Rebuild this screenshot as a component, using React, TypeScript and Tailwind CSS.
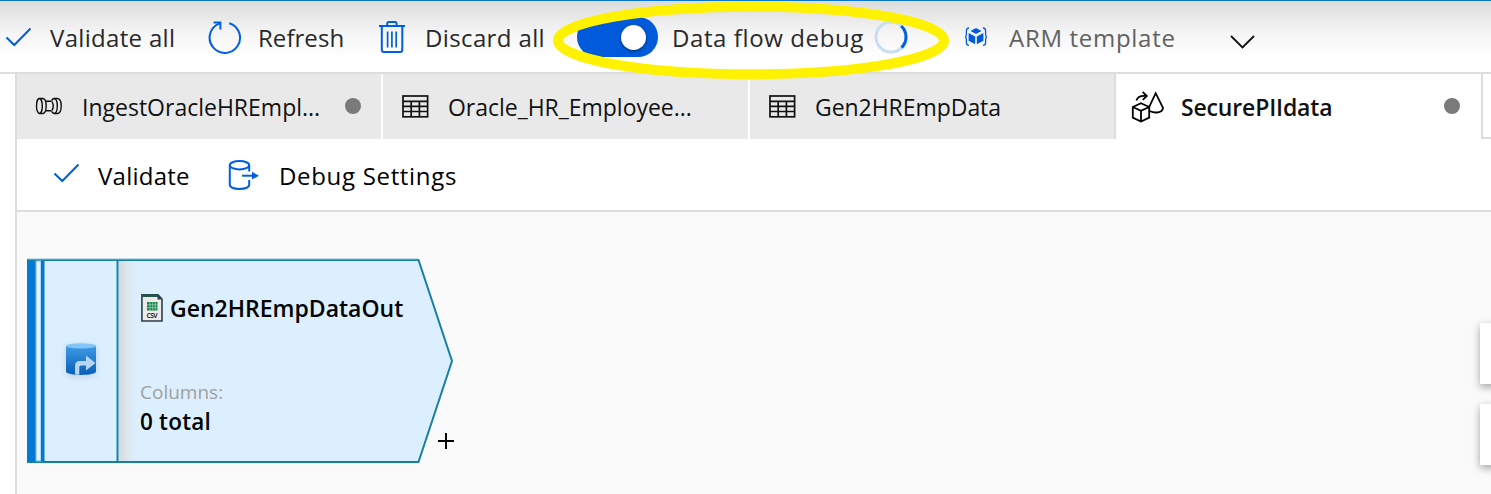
import React from "react";

const Check = () => (
  <svg width="28" height="20" viewBox="0 0 28 20" fill="none" stroke="#005ee0" strokeWidth="2" className="shrink-0">
    <path d="M2.5 10.5 L10.3 18 L26.5 1.5" />
  </svg>
);

const Refresh = () => (
  <svg width="36" height="36" viewBox="0 0 36 36" fill="none" stroke="#005ee0" strokeWidth="2" className="shrink-0">
    <path d="M21.3 4.2 A15.2 15.2 0 1 1 11.2 4.6 L12.6 3.8" />
    <path d="M5.5 3.4 H12.4 V10.5" />
  </svg>
);

const Trash = () => (
  <svg width="28" height="34" viewBox="0 0 28 34" fill="none" stroke="#005ee0" strokeWidth="2" className="shrink-0">
    <path d="M0 6 H26 M8.2 6 V4 Q8.2 2 9.8 2 H16 Q17.6 2 17.6 4 V6" />
    <path d="M2.8 6.5 V29.5 Q2.8 32 5 32 H21.2 Q23.3 32 23.3 29.5 V6.5" />
    <path d="M8.6 11.5 V27.5 M12.9 11.5 V27.5 M17.2 11.5 V27.5" strokeWidth="1.7" />
  </svg>
);

const Toggle = () => (
  <div className="flex h-10 w-[81px] shrink-0 items-center justify-end rounded-full bg-[#005ad9] pr-[12px]">
    <div className="h-[25px] w-[25px] rounded-full bg-white shadow-[0_1px_3px_rgba(0,0,0,0.5)]" />
  </div>
);

const Spinner = () => (
  <svg width="34" height="34" viewBox="0 0 34 34" fill="none" strokeWidth="3" className="shrink-0">
    <circle cx="17" cy="17" r="15" stroke="#c7def3" />
    <path d="M27.2 6 A15 15 0 0 1 27.6 27.6" stroke="#0060e0" />
  </svg>
);

const Arm = () => (
  <svg width="22" height="20" viewBox="0 0 22 20" fill="none" className="shrink-0">
    <path d="M4 1 Q1.4 1 1.4 4 V7 Q1.4 9.4 .4 9.8 Q1.4 10.2 1.4 12.5 V15.5 Q1.4 18.4 4 18.4 M18 1 Q20.6 1 20.6 4 V7 Q20.6 9.4 21.6 9.8 Q20.6 10.2 20.6 12.5 V15.5 Q20.6 18.4 18 18.4" stroke="#005ad9" strokeWidth="1.3" />
    <g fill="#005ad9">
      <path d="M11 1 L16.5 4.1 L11 7.1 L5.5 4.1Z" />
      <path d="M3.6 6 L10.2 9.4 V17.2 L3.6 13.8Z" />
      <path d="M18.4 6 L11.8 9.4 V17.2 L18.4 13.8Z" />
    </g>
  </svg>
);

const Pipeline = () => (
  <svg width="28" height="18" viewBox="0 0 28 18" fill="none" stroke="#111" strokeWidth="1.4" className="shrink-0">
    <ellipse cx="4.4" cy="9" rx="2.9" ry="7.5" />
    <path d="M4.4 1.5 H8 C12.2 2 12.2 16 8 16.5 H4.4" />
    <path d="M11 4.3 H16.6 M11 13.7 H16.6" />
    <path d="M17 4.5 C18.4 7 18.4 11 17 13.5" />
    <path d="M16.6 3.6 C17.3 2.2 18 1.5 19.2 1.5 C23.3 2 23.3 16 19.2 16.5 C18 16.5 17.3 15.8 16.6 14.4" />
    <path d="M19.2 1.5 H22.6 C27.4 2 27.4 16 22.6 16.5 H19.2" />
  </svg>
);

const Table = () => (
  <svg width="27" height="23" viewBox="0 0 27 23" fill="none" stroke="#111" strokeWidth="1.7" className="shrink-0">
    <rect x="1" y="1" width="24.6" height="20.8" />
    <path d="M1 6.4 H25.6 M1 11.4 H25.6 M1 16.5 H25.6 M9.2 6.4 V21.8 M17.4 6.4 V21.8" />
  </svg>
);

const DataFlow = () => (
  <svg width="34" height="32" viewBox="0 0 34 32" fill="none" stroke="#000" strokeWidth="1.8" className="shrink-0">
    <path d="M10 12.2 L18.2 16 V26.6 L10 30.6 L1.8 26.6 V16Z M1.8 16 L10 19.8 L18.2 16 M10 19.8 V30.6" />
    <path d="M17.4 17.6 L24.7 2.2 L32 16.8 C31.5 22 24 22.5 18.6 20" />
    <path d="M5.4 9.6 C6.5 6 10 4.3 15.4 5 M11.6 .9 L15.8 5 L11.8 8.8" />
  </svg>
);

const DebugDb = () => (
  <svg width="32" height="32" viewBox="0 0 32 32" fill="none" stroke="#005ee0" strokeWidth="2" className="shrink-0">
    <ellipse cx="11.5" cy="6.2" rx="9.7" ry="4.2" />
    <path d="M1.8 6.2 V26 C2.5 31.2 20.5 31.2 21.2 26 V21 M21.2 6.2 V12.6" />
    <path d="M14 16.7 H25" />
    <path d="M24 12.8 L31 16.7 L24 20.5Z" fill="#005ee0" stroke="none" />
  </svg>
);

const Csv = () => (
  <svg width="22" height="28" viewBox="0 0 22 28" className="shrink-0">
    <path d="M.9 .9 H17 L21 5 V27 H.9Z" fill="#eceaea" stroke="#2e3f49" strokeWidth="1.6" />
    <path d="M.9 .4 H17 V3 H.9Z" fill="#215648" />
    <path d="M16.5 .5 L21.5 5.6 H16.5Z" fill="#2e3f49" />
    <rect x="6" y="8" width="10.5" height="8.5" fill="#16874b" />
    <path d="M6 10.8 H17 M6 13.7 H17 M9 8 V16.5 M11.7 8 V16.5 M14.3 8 V16.5" stroke="#a5d3b8" strokeWidth=".7" />
    <text x="11" y="24.4" textAnchor="middle" fontSize="6.6" fontWeight="700" fill="#22323d" textLength="11">CSV</text>
  </svg>
);

const Source = () => (
  <svg width="32" height="34" viewBox="0 0 32 34" className="mb-[5px] overflow-visible drop-shadow-[0_2px_3px_rgba(0,0,0,0.12)]">
    <defs>
      <linearGradient id="db" x1="0" y1="0" x2="0" y2="1">
        <stop offset="0" stopColor="#3f9be6" />
        <stop offset="1" stopColor="#075fba" />
      </linearGradient>
    </defs>
    <path d="M1 4 V29.5 C1 34 31 34 31 29.5 V4Z" fill="url(#db)" />
    <ellipse cx="16" cy="3.9" rx="15" ry="2.7" fill="#83c5f6" />
    <path d="M10 32.5 V24 Q10 19 15 19 H21 V13.5 L30.5 21 L21 28.5 V23.5 H16 Q14.3 23.5 14.3 25.2 V32.7Z" fill="#b7d6f2" />
  </svg>
);

const Dot = () => <div className="mb-[2px] h-4 w-4 shrink-0 rounded-full bg-[#7a7a7a]" />;

export default function App() {
  return (
    <div className="relative h-[494px] w-[1491px] overflow-hidden bg-white font-['Open_Sans','Noto_Sans',sans-serif] text-[24px] whitespace-nowrap text-[#111]">
      <header className="flex h-[74px] items-center border-t border-b-2 border-t-[#0b76cf] border-b-[#dddddd] bg-linear-to-b from-[#dcdcdc] via-[#f5f5f5] via-45% to-white to-80% pt-px text-[#292929]">
        <div className="flex w-[208px] items-center pl-1">
          <Check />
          <span className="mt-px ml-[18px] tracking-[0.32px]">Validate all</span>
        </div>
        <div className="flex w-[171px] items-center">
          <Refresh />
          <span className="mt-px ml-[14px] tracking-[0.05px]">Refresh</span>
        </div>
        <div className="flex w-[198px] items-center">
          <Trash />
          <span className="mt-px ml-[18px] tracking-[0.37px]">Discard all</span>
        </div>
        <div className="flex w-[387px] items-center">
          <Toggle />
          <span className="mt-px ml-[14px] w-[202px] tracking-[0.6px]">Data flow debug</span>
          <Spinner />
        </div>
        <div className="flex w-[265px] items-center">
          <span className="ml-[1px]"><Arm /></span>
          <span className="mt-[2px] ml-[22px] tracking-[0.7px] text-[#616161]">ARM template</span>
        </div>
        <svg width="26" height="16" viewBox="0 0 26 16" fill="none" stroke="#111" strokeWidth="1.8" className="mt-[9px]">
          <path d="M2 2 L13.5 13.5 L25 2" />
        </svg>
      </header>

      <main className="ml-[15px] flex h-[420px] flex-col border-l-2 border-[#dddddd]">
        <nav className="flex h-[65px] shrink-0 text-[23px]">
          <div className="flex w-[366px] shrink-0 items-center border-r-2 border-white bg-[#e9e9e9] pr-5 pl-[18px]">
            <span className="mb-[2px]"><Pipeline /></span>
            <span className="mt-[2px] ml-[19px] w-[263px]">IngestOracleHREmpl...</span>
            <Dot />
          </div>
          <div className="flex w-[367px] shrink-0 items-center border-r-2 border-white bg-[#e9e9e9] pl-[19px]">
            <Table />
            <span className="mt-[2px] ml-[19px] tracking-[-0.03px]">Oracle_HR_Employee...</span>
          </div>
          <div className="flex w-[366px] shrink-0 items-center border-r-2 border-[#dddddd] bg-[#e9e9e9] pl-[19px]">
            <Table />
            <span className="mt-[2px] ml-[19px] tracking-[-0.05px]">Gen2HREmpData</span>
          </div>
          <div className="flex w-[367px] shrink-0 items-center border-r-2 border-[#dddddd] bg-white pl-[15px]">
            <DataFlow />
            <span className="mt-[2px] ml-[16px] w-[263px] font-semibold tracking-[-0.15px]">SecurePIIdata</span>
            <Dot />
          </div>
          <div className="w-[8px] shrink-0 border-b-2 border-[#dddddd]" />
        </nav>
        <div className="flex h-[73px] shrink-0 items-center border-b-2 border-[#dddddd] text-black">
          <span className="mb-[4px] ml-[35px]"><Check /></span>
          <span className="mt-[3px] ml-[18px] w-[130px] tracking-[0.25px]">Validate</span>
          <DebugDb />
          <span className="mt-[3px] ml-[19px] tracking-[0.68px]">Debug Settings</span>
        </div>
        <section className="relative min-h-0 flex-1 overflow-hidden bg-[#fafafa]">
          <div className="absolute top-[46px] left-[9px] h-[206px] w-[430px]">
            <svg width="430" height="206" viewBox="0 0 430 206" className="absolute inset-0">
              <defs>
                <linearGradient id="fold">
                  <stop offset="0" stopColor="#d6d9dd" />
                  <stop offset="0.5" stopColor="#dde6ee" />
                  <stop offset="1" stopColor="#dceffe" />
                </linearGradient>
              </defs>
              <path d="M2 2 H392.5 L426 103 L392.5 204 H2Z" fill="#dceffe" stroke="#1680a4" strokeWidth="2" />
              <rect x="93" y="3" width="17" height="200" fill="url(#fold)" />
              <path d="M2 2 H392" stroke="#8dbfd4" strokeWidth="1" transform="translate(0 -1)" />
              <rect x="1.5" y="3" width="8.5" height="200" fill="#0078d4" />
              <rect x="10" y="3" width="5" height="200" fill="#e3f4ff" stroke="#7bbce9" strokeWidth="1" />
              <rect x="15" y="3" width="3.5" height="200" fill="#0078d4" />
              <path d="M91.5 2 V204" stroke="#1680a4" strokeWidth="2" />
            </svg>
            <div className="relative flex h-full">
              <div className="flex w-[92px] items-center pl-[39px]"><Source /></div>
              <div className="flex flex-col pt-[33px] pl-[22px] text-black">
                <div className="flex h-[34px] items-center">
                  <span className="ml-px"><Csv /></span>
                  <span className="ml-[7px] text-[23px] font-semibold">Gen2HREmpDataOut</span>
                </div>
                <span className="mt-[54px] text-[19px] leading-[26px] text-[#a0a0a0]">Columns:</span>
                <span className="mt-px text-[22.5px] leading-[32px] font-semibold tracking-[0.2px]">0 total</span>
              </div>
            </div>
          </div>
          <svg width="18" height="18" viewBox="0 0 18 18" stroke="#000" strokeWidth="2" className="absolute top-[220px] left-[420px]">
            <path d="M1 9 H17 M9 1 V17" />
          </svg>
          <div className="absolute top-[111px] left-[1463px] h-[61px] w-[60px] bg-white shadow-[0_3px_8px_rgba(0,0,0,0.35)]" />
          <div className="absolute top-[192px] left-[1463px] h-[61px] w-[60px] bg-white shadow-[0_3px_8px_rgba(0,0,0,0.35)]" />
        </section>
      </main>

      <svg width="400" height="82" viewBox="0 0 400 82" fill="none" className="absolute top-0 left-[551px]">
        <ellipse cx="200" cy="40.5" rx="193" ry="33.7" stroke="#fff200" strokeWidth="10" />
      </svg>
    </div>
  );
}
